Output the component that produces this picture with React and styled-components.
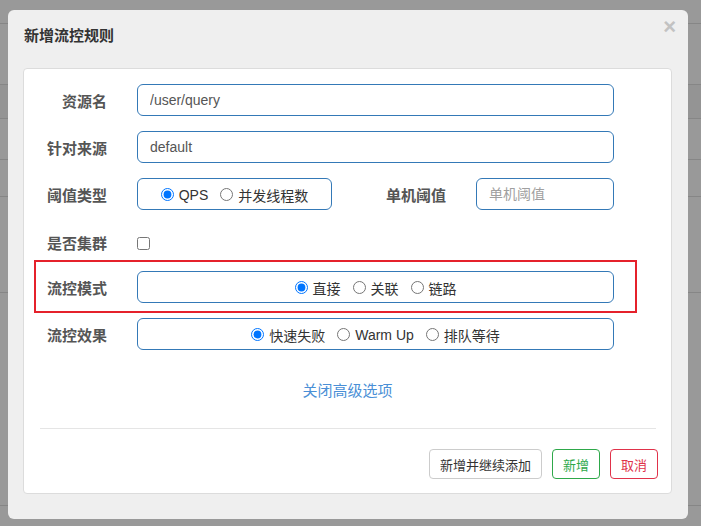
import React from "react";
import styled, { createGlobalStyle } from "styled-components";

const GlobalStyle = createGlobalStyle`
  html, body {
    margin: 0;
    padding: 0;
  }
  body {
    font-family: "Liberation Sans", "Noto Sans CJK SC", sans-serif;
    font-size: 14px;
    color: #333;
  }
  * {
    box-sizing: border-box;
  }
`;

const backdropRows = [24, 61, 34, 41, 37, 96, 213];

export default function App() {
  return (
    <SPage>
      <GlobalStyle />
      <SBackdrop>
        {backdropRows.map((h, i) => (
          <SBackdropRow key={i} height={h} dark={i === 2} />
        ))}
      </SBackdrop>
      <SModal>
        <SHeader>
          <STitle>新增流控规则</STitle>
          <SClose>×</SClose>
        </SHeader>
        <SCard>
          <SForm>
            <SRow>
              <SLabel>资源名</SLabel>
              <SInput defaultValue="/user/query" />
            </SRow>
            <SRow>
              <SLabel>针对来源</SLabel>
              <SInput defaultValue="default" />
            </SRow>
            <SRow>
              <SLabel>阈值类型</SLabel>
              <SRadioBox width="195px">
                <Radio name="grade" label="QPS" checked />
                <Radio name="grade" label="并发线程数" />
              </SRadioBox>
              <SLabel inline>单机阈值</SLabel>
              <SInput placeholder="单机阈值" />
            </SRow>
            <SRow height="35px" spacing="0">
              <SLabel>是否集群</SLabel>
              <SCheckbox type="checkbox" />
            </SRow>
            <SRow highlighted spacing="5px">
              <SLabel>流控模式</SLabel>
              <SRadioBox>
                <Radio name="strategy" label="直接" checked />
                <Radio name="strategy" label="关联" />
                <Radio name="strategy" label="链路" />
              </SRadioBox>
            </SRow>
            <SRow spacing="0">
              <SLabel>流控效果</SLabel>
              <SRadioBox>
                <Radio name="behavior" label="快速失败" checked />
                <Radio name="behavior" label="Warm Up" />
                <Radio name="behavior" label="排队等待" />
              </SRadioBox>
            </SRow>
          </SForm>
          <SToggleLink>关闭高级选项</SToggleLink>
          <SDivider />
          <SFooter>
            <SButton>新增并继续添加</SButton>
            <SButton variant="success">新增</SButton>
            <SButton variant="danger">取消</SButton>
          </SFooter>
        </SCard>
      </SModal>
    </SPage>
  );
}

function Radio({ name, label, checked }) {
  return (
    <SRadioItem>
      <input type="radio" name={name} defaultChecked={checked} />
      <span>{label}</span>
    </SRadioItem>
  );
}

const SPage = styled.div`
  position: relative;
  width: 701px;
  height: 526px;
  overflow: hidden;
  background: #999;
`;

const SBackdrop = styled.div`
  display: flex;
  flex-direction: column;
`;

const SBackdropRow = styled.div`
  height: ${p => p.height}px;
  border-bottom: 1px solid #868686;
  background: ${p => (p.dark ? "#949494" : "#999")};
`;

const SModal = styled.div`
  position: absolute;
  top: 10px;
  left: 8px;
  width: 680px;
  padding: 0 16px 25px 15px;
  background: #efefef;
  border-radius: 6px;
`;

const SHeader = styled.div`
  display: flex;
  justify-content: space-between;
  align-items: flex-start;
  padding: 16px 0 0 1px;
  margin-right: -4px;
  height: 58px;
`;

const STitle = styled.h4`
  margin: 0;
  font-size: 15px;
  line-height: 20px;
  font-weight: bold;
  color: #333;
`;

const SClose = styled.button`
  border: none;
  background: none;
  padding: 0;
  margin-top: -9px;
  font-family: "Liberation Sans", sans-serif;
  font-size: 22px;
  line-height: 20px;
  font-weight: bold;
  color: #c2c2c2;
  cursor: pointer;
`;

const SCard = styled.div`
  background: #fff;
  border: 1px solid #dcdcdc;
  border-radius: 4px;
  padding: 15px 0 14px;
`;

const SForm = styled.div`
  display: flex;
  flex-direction: column;
  width: 603px;
  margin-left: 10px;
`;

const SRow = styled.div`
  display: flex;
  align-items: center;
  height: ${p => (p.highlighted ? "53px" : p.height || "32px")};
  margin-bottom: ${p => p.spacing || "15px"};
  padding: ${p => (p.highlighted ? "9px 21px 8px 9px" : "0 23px 0 11px")};
  border: ${p => (p.highlighted ? "2px solid #e5212b" : "none")};
`;

const SLabel = styled.label`
  flex: none;
  width: 92px;
  margin-left: ${p => (p.inline ? "52px" : "0")};
  padding-right: 30px;
  text-align: right;
  font-size: 15px;
  font-weight: bold;
  color: #555;
  white-space: nowrap;
`;

const SInput = styled.input`
  flex: 1;
  min-width: 0;
  height: 32px;
  padding: 0 12px;
  border: 1px solid #3479b7;
  border-radius: 6px;
  font-family: "Liberation Sans", "Noto Sans CJK SC", sans-serif;
  font-size: 14px;
  color: #555;
  outline: none;
  &::placeholder {
    color: #a0a0a0;
  }
`;

const SRadioBox = styled.div`
  display: flex;
  justify-content: center;
  align-items: center;
  gap: 12px;
  flex: ${p => (p.width ? "none" : "1")};
  width: ${p => p.width || "auto"};
  height: 32px;
  border: 1px solid #3479b7;
  border-radius: 6px;
  padding-top: 1px;
`;

const SRadioItem = styled.label`
  display: inline-flex;
  align-items: center;
  gap: 5px;
  font-size: 14px;
  color: #333;
  white-space: nowrap;
  input {
    width: 13px;
    height: 13px;
    margin: 0;
  }
`;

const SCheckbox = styled.input`
  width: 13px;
  height: 13px;
  margin: 1px 0 0;
`;

const SToggleLink = styled.a`
  display: block;
  margin-top: 31px;
  line-height: 20px;
  text-align: center;
  font-size: 15px;
  color: #4a8fd6;
  cursor: pointer;
`;

const SDivider = styled.hr`
  margin: 27px 15px 0 16px;
  border: none;
  border-top: 1px solid #e5e5e5;
`;

const buttonColors = {
  default: { border: "#ccc", color: "#333" },
  success: { border: "#2ea84a", color: "#2ea84a" },
  danger: { border: "#e0324a", color: "#e0324a" }
};

const SFooter = styled.div`
  display: flex;
  justify-content: flex-end;
  gap: 10px;
  margin: 20px 13px 0 0;
`;

const SButton = styled.button`
  height: 30px;
  padding: 0 10px;
  background: #fff;
  border: 1px solid ${p => buttonColors[p.variant || "default"].border};
  border-radius: 4px;
  font-family: "Liberation Sans", "Noto Sans CJK SC", sans-serif;
  font-size: 13px;
  color: ${p => buttonColors[p.variant || "default"].color};
  cursor: pointer;
`;
